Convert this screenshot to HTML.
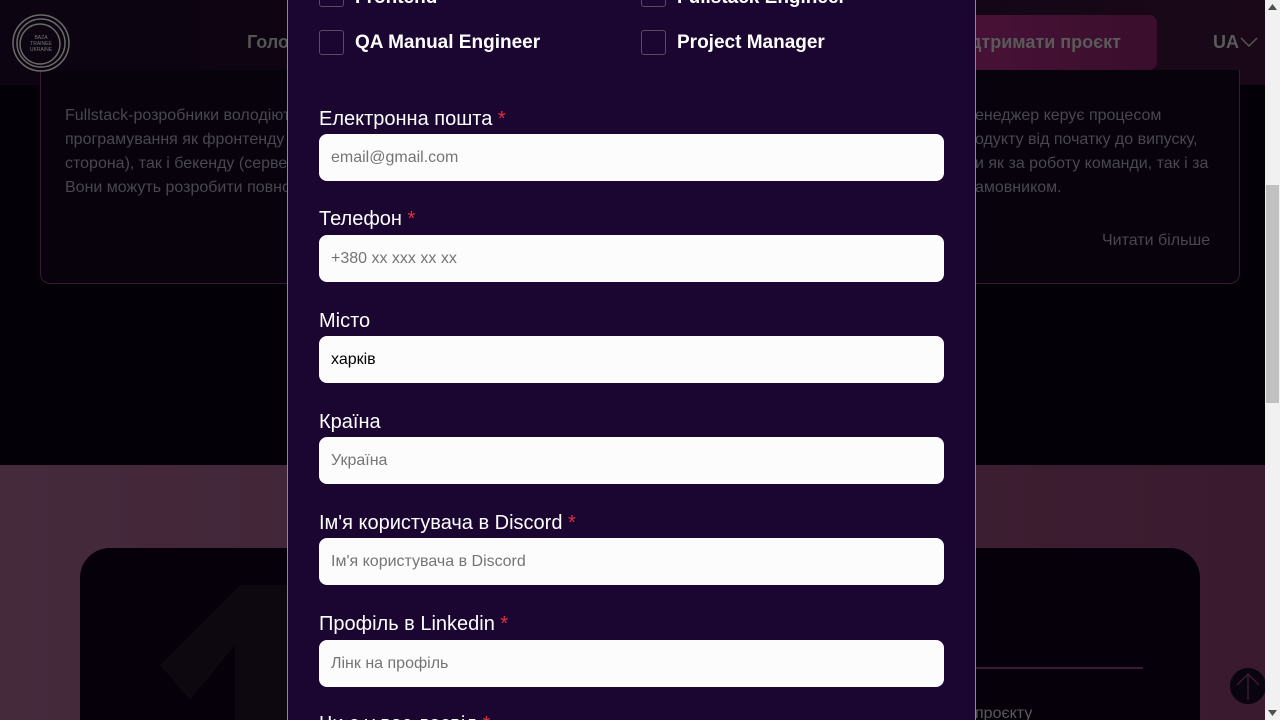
<!DOCTYPE html><html><head><meta charset="utf-8"><style>
*{margin:0;padding:0;box-sizing:border-box}
html{width:1280px;height:720px;overflow:hidden}
body{width:1280px;height:720px;overflow:hidden;position:relative;background:#040007;font-family:"Liberation Sans",sans-serif}
.a{position:absolute}
.hdr{left:0;top:0;width:1265px;height:85px;background:linear-gradient(90deg,#0c0410,#120616 70%,#1a0818)}
.card{left:40px;top:70px;width:1200px;height:214px;border:1px solid #3a1a34;border-top:none;border-radius:0 0 10px 10px;background:#07020b}
.txt{color:#4a4750;font-size:16px;line-height:24px;white-space:nowrap}
.bottom{left:0;top:465px;width:1265px;height:255px;background:linear-gradient(90deg,#452a3c,#3a1a2e)}
.card2{left:80px;top:548px;width:1120px;height:200px;background:#050009;border-radius:30px}
.modal{left:287px;top:0;width:689px;height:720px;background:#1a0630;border-left:1px solid #d060c0;border-right:1px solid #d060c0}
.cb{width:25px;height:25px;border:1px solid #5a4a66;border-radius:3px}
.cbl{color:#fff;font-weight:bold;font-size:19px}
.lbl{color:#fff;font-size:20px;left:319px}
.lbl b{color:#e03040;font-weight:normal}
.in{left:319px;width:625px;height:47px;background:#fcfcfd;border-radius:8px;font-size:16px;color:#757575;padding:14px 12px;line-height:19px}
.sb{left:1265px;top:0;width:15px;height:720px;background:#f1f1f1}
</style></head><body>
<div class="a hdr"></div>
<div class="a card"></div>
<div class="a txt" style="left:65px;top:104px">Fullstack-розробники володіють<br>програмування як фронтенду<br>сторона), так і бекенду (серве<br>Вони можуть розробити повно</div>
<div class="a txt" style="left:975px;top:104px">енеджер керує процесом<br>одукту від початку до випуску,<br>и як за роботу команди, так і за<br>амовником.</div>
<div class="a txt" style="left:1102px;top:229px">Читати більше</div>
<svg class="a" style="left:10px;top:12px" width="62" height="62" viewBox="0 0 62 62"><g fill="none" stroke="#6a6a6a" stroke-width="1.5"><circle cx="31" cy="31" r="28"/><circle cx="31" cy="31" r="24"/><circle cx="30" cy="32" r="20"/></g><text x="31" y="27" fill="#777" font-size="5" text-anchor="middle">BAZA</text><text x="31" y="33" fill="#777" font-size="5" text-anchor="middle">TRAINEE</text><text x="31" y="39" fill="#777" font-size="5" text-anchor="middle">UKRAINE</text></svg>
<div class="a" style="left:247px;top:32px;color:#555;font-weight:bold;font-size:18px">Голо</div>
<div class="a" style="left:940px;top:15px;width:217px;height:55px;border-radius:8px;background:linear-gradient(90deg,#4a1238,#3a0e2c)"></div>
<div class="a" style="left:965px;top:32px;color:#5a5a5a;font-weight:bold;font-size:18px">ідтримати проєкт</div>
<div class="a" style="left:1213px;top:32px;color:#5a5a5a;font-weight:bold;font-size:18px">UA</div>
<svg class="a" style="left:1240px;top:36px" width="18" height="12"><path d="M1 2l8 8 8-8" fill="none" stroke="#555" stroke-width="1.5"/></svg>
<div class="a bottom"></div>
<div class="a card2"></div>
<svg class="a" style="left:150px;top:585px" width="150" height="135"><path d="M10 80L90 0h50v135H85V60L40 115z" fill="#0d0810"/></svg>
<div class="a" style="left:975px;top:667px;width:168px;height:2px;background:#3a1a34"></div>
<div class="a" style="left:975px;top:705px;color:#5a5a5a;font-size:16px">проєкту</div>
<div class="a" style="left:1228px;top:666px;width:40px;height:40px;border-radius:50%;background:#0a0410;border:2px solid #3a1a30"></div>
<svg class="a" style="left:1232px;top:670px" width="32" height="32"><path d="M16 4v26M5 15L16 4l11 11" fill="none" stroke="#3a1a30" stroke-width="1.5"/></svg>
<div class="a modal"></div>
<div class="a cb" style="left:319px;top:-18px"></div><div class="a cbl" style="left:355px;top:-13px">Frontend</div>
<div class="a cb" style="left:641px;top:-18px"></div><div class="a cbl" style="left:677px;top:-13px">Fullstack Engineer</div>
<div class="a cb" style="left:319px;top:30px"></div><div class="a cbl" style="left:355px;top:32px">QA Manual Engineer</div>
<div class="a cb" style="left:641px;top:30px"></div><div class="a cbl" style="left:677px;top:32px">Project Manager</div>
<div class="a lbl" style="top:108px">Електронна пошта <b>*</b></div>
<div class="a in" style="top:134px">email@gmail.com</div>
<div class="a lbl" style="top:208px">Телефон <b>*</b></div>
<div class="a in" style="top:235px">+380 xx xxx xx xx</div>
<div class="a lbl" style="top:310px">Місто</div>
<div class="a in" style="top:336px;color:#000">харків</div>
<div class="a lbl" style="top:411px">Країна</div>
<div class="a in" style="top:437px">Україна</div>
<div class="a lbl" style="top:512px">Ім'я користувача в Discord <b>*</b></div>
<div class="a in" style="top:538px">Ім'я користувача в Discord</div>
<div class="a lbl" style="top:613px">Профіль в Linkedin <b>*</b></div>
<div class="a in" style="top:640px">Лінк на профіль</div>
<div class="a lbl" style="top:713px">Чи є у вас досвід <b>*</b></div>
<div class="a sb"></div>
<div class="a" style="left:1266px;top:185px;width:13px;height:218px;background:#c1c1c1"></div>
<svg class="a" style="left:1268px;top:4px" width="9" height="6"><path d="M0 6L4.5 0 9 6z" fill="#505050"/></svg>
<svg class="a" style="left:1268px;top:710px" width="9" height="6"><path d="M0 0L4.5 6 9 0z" fill="#505050"/></svg>
</body></html>
